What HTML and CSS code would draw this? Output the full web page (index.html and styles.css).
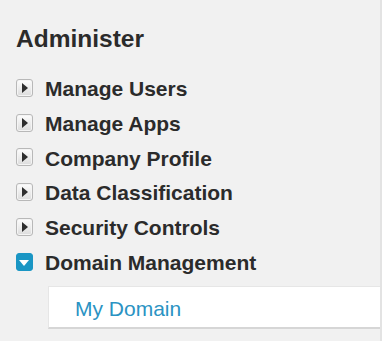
FILE: index.html
```html
<!DOCTYPE html>
<html lang="en">

<head>
    <meta charset="utf-8">
    <title>Administer</title>
    <link rel="stylesheet" href="styles.css">
</head>

<body>
    <nav class="sidebar">
        <h2 class="overskrift">Administer</h2>
        <ul class="menu">
            <li class="punkt"><span class="pil"></span>Manage Users</li>
            <li class="punkt"><span class="pil"></span>Manage Apps</li>
            <li class="punkt"><span class="pil"></span>Company Profile</li>
            <li class="punkt"><span class="pil"></span>Data Classification</li>
            <li class="punkt"><span class="pil"></span>Security Controls</li>
            <li class="punkt aaben"><span class="pil"></span>Domain Management</li>
        </ul>
        <div class="undermenu">
            <a href="#" class="link">My Domain</a>
        </div>
    </nav>
</body>

</html>
```
FILE: styles.css
```css
html {
    font-family: 'Liberation Sans', Arial, sans-serif;
}

body {
    margin: 0;
    background-color: #f1f1f1;
}

.sidebar {
    width: 382px;
    height: 341px;
    border-right: 2px solid #e3e3e3;
    padding-left: 16px;
    box-sizing: border-box;
}

.overskrift {
    margin: 0;
    padding-top: 24px;
    font-size: 24.5px;
    line-height: 30px;
    font-weight: bold;
    color: #2b2b2b;
}

.menu {
    list-style: none;
    margin: 18px 0 0 0;
    padding: 0;
}

.punkt {
    display: flex;
    align-items: center;
    height: 34.8px;
    line-height: 34.8px;
    font-size: 21px;
    font-weight: bold;
    color: #2b2b2b;
}

.pil {
    position: relative;
    flex-shrink: 0;
    width: 15px;
    height: 16px;
    margin-top: -3px;
    margin-right: 12px;
    border: 1px solid #b8b8b8;
    border-radius: 3px;
    background: linear-gradient(#fdfdfd, #dcdcdc);
    box-shadow: inset 0 0 0 1px #f4f4f4;
}

.pil::after {
    content: "";
    position: absolute;
    left: 5px;
    top: 3px;
    border-left: 6px solid #2e2e2e;
    border-top: 5px solid transparent;
    border-bottom: 5px solid transparent;
}

.aaben .pil {
    border-color: #1a96c4;
    background: #1a96c4;
    box-shadow: none;
}

.aaben .pil::after {
    left: 2px;
    top: 6px;
    border-top: 6px solid #fff;
    border-left: 5.5px solid transparent;
    border-right: 5.5px solid transparent;
    border-bottom: 0;
}

.undermenu {
    margin-top: 5px;
    margin-left: 32px;
    background-color: #fff;
    border-top: 1px solid #e6e6e6;
    border-left: 1px solid #e6e6e6;
    border-bottom: 2px solid #d6d6d6;
    padding: 10px 0 6px 26px;
}

.link {
    font-size: 21px;
    line-height: 24px;
    color: #2a93c3;
    text-decoration: none;
}
```
